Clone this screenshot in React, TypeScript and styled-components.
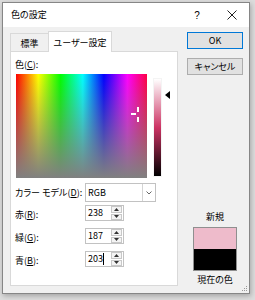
import styled, { createGlobalStyle } from 'styled-components';

const GlobalStyle = createGlobalStyle`
  html, body {
    margin: 0;
    padding: 0;
  }
  body {
    width: 255px;
    height: 300px;
    overflow: hidden;
    background: #dcdcdc;
    font-family: "Noto Sans CJK JP", "Noto Sans", sans-serif;
    font-size: 9px;
    font-feature-settings: 'palt';
    color: #000;
  }
`;

// current colour (238, 187, 203) in HLS
const color = { r: 238, g: 187, b: 203, hue: 341, sat: 0.6, lum: 0.833 };
const cross = { x: 122, y: 41 };

const Window = styled.div`
  position: relative;
  box-sizing: border-box;
  width: 248px;
  height: 292px;
  margin: 2px 0 0 2px;
  border: 1px solid #868686;
  background: #f0f0f0;
  box-shadow: 1px 2px 5px rgba(0, 0, 0, 0.25);
  display: flex;
  flex-direction: column;
`;

const TitleBar = styled.div`
  height: 24px;
  background: #fff;
  display: flex;
  align-items: center;
  padding-left: 8px;
`;

const Title = styled.span`
  line-height: 12px;
`;

const HelpButton = styled.span`
  margin-left: auto;
  width: 8px;
  text-align: center;
  font-family: "Liberation Sans", sans-serif;
  font-size: 10px;
`;

const CloseButton = styled.svg`
  margin: 0 12px 0 26px;
`;

const Body = styled.div`
  flex: 1;
  display: flex;
  padding: 4px 0 7px 7px;
`;

const LeftColumn = styled.div`
  width: 168px;
  display: flex;
  flex-direction: column;
`;

const TabBar = styled.div`
  height: 20px;
  display: flex;
  align-items: flex-end;
`;

const Tab = styled.div<{ $active?: boolean; $width: number }>`
  position: relative;
  z-index: ${({ $active }) => ($active ? 1 : 0)};
  box-sizing: border-box;
  width: ${({ $width }) => $width}px;
  height: ${({ $active }) => ($active ? 21 : 18)}px;
  margin-bottom: ${({ $active }) => ($active ? -1 : 0)}px;
  margin-left: ${({ $active }) => ($active ? -1 : 0)}px;
  border: 1px solid #d9d9d9;
  border-bottom: none;
  background: ${({ $active }) => ($active ? '#fff' : '#f0f0f0')};
  display: flex;
  align-items: center;
  justify-content: center;
  padding-top: ${({ $active }) => ($active ? 0 : 1)}px;
`;

const Panel = styled.div`
  flex: 1;
  box-sizing: border-box;
  background: #fff;
  border: 1px solid #d9d9d9;
  padding: 6px 0 0 4px;
`;

const FieldLabel = styled.div`
  line-height: 13px;
  white-space: nowrap;
`;

const SpectrumRow = styled.div`
  display: flex;
  margin: 3px 0 0 1px;
`;

const Spectrum = styled.div`
  position: relative;
  width: 131px;
  height: 104px;
  background:
    linear-gradient(to bottom, rgba(128, 128, 128, 0), rgb(128, 128, 128)),
    linear-gradient(
      to right,
      #ff0000 0%,
      #ffff00 17%,
      #00ff00 34%,
      #00ffff 51%,
      #0000ff 67%,
      #ff00ff 85%,
      #ff0044 100%
    );
`;

const Crosshair = styled.svg`
  position: absolute;
`;

const LumBar = styled.div`
  width: 9px;
  height: 99px;
  margin: 4px 0 0 6px;
  box-sizing: border-box;
  border: 1px solid #f4f4f4;
`;

const LumArrow = styled.svg`
  margin-left: 3px;
`;

const FieldGrid = styled.div`
  display: grid;
  grid-template-columns: 70px auto;
  grid-template-rows: 19px 20px 20px 20px;
  row-gap: 3px;
  margin-top: 5px;
  align-items: start;
  & > ${FieldLabel} {
    line-height: 19px;
  }
`;

const SpinLabel = styled(FieldLabel)`
  line-height: 16px;
`;

const Combo = styled.div`
  box-sizing: border-box;
  width: 71px;
  height: 19px;
  border: 1px solid #c2c2c2;
  background: #fff;
  display: flex;
  align-items: stretch;
`;

const ComboText = styled.span`
  flex: 1;
  padding-left: 2px;
  line-height: 17px;
`;

const ComboButton = styled.span`
  width: 12px;
  border-left: 1px solid #d4d4d4;
  display: flex;
  align-items: center;
  justify-content: center;
`;

const Spinner = styled.div`
  box-sizing: border-box;
  width: 39px;
  height: 16px;
  border: 1px solid #c2c2c2;
  background: #fff;
  display: flex;
`;

const SpinValue = styled.span`
  flex: 1;
  padding-left: 2px;
  line-height: 14px;
  display: flex;
  align-items: center;
`;

const Caret = styled.span`
  width: 1px;
  height: 12px;
  background: #000;
`;

const SpinButtons = styled.span`
  width: 11px;
  display: flex;
  flex-direction: column;
  gap: 1px;
  padding: 0 1px 0 0;
`;

const SpinArrow = styled.span`
  flex: 1;
  border: 1px solid #c8c8c8;
  background: #f4f4f4;
  display: flex;
  align-items: center;
  justify-content: center;
`;

const RightColumn = styled.div`
  width: 56px;
  margin-left: 9px;
  display: flex;
  flex-direction: column;
`;

const Button = styled.div<{ $default?: boolean }>`
  box-sizing: border-box;
  height: 17px;
  border: 1px solid ${({ $default }) => ($default ? '#0078d7' : '#adadad')};
  background: #e1e1e1;
  display: flex;
  align-items: center;
  justify-content: center;
  margin-top: ${({ $default }) => ($default ? 1 : 9)}px;
`;

const SwatchLabel = styled.div<{ $top?: boolean }>`
  line-height: 12px;
  text-align: center;
  margin-top: ${({ $top }) => ($top ? 'auto' : '3px')};
`;

const Swatch = styled.div`
  box-sizing: border-box;
  width: 44px;
  height: 44px;
  margin: 4px auto 0;
  border: 1px solid #8f8f8f;
  display: flex;
  flex-direction: column;
`;

const SwatchHalf = styled.div<{ $fill: string; $h: number }>`
  height: ${({ $h }) => $h}px;
  background: ${({ $fill }) => $fill};
`;

const Grip = styled.svg`
  position: absolute;
  right: 1px;
  bottom: 1px;
`;

const SpinBox = ({ value, caret }: { value: number; caret?: boolean }) => (
  <Spinner>
    <SpinValue>
      {value}
      {caret && <Caret />}
    </SpinValue>
    <SpinButtons>
      <SpinArrow>
        <svg width="5" height="3" viewBox="0 0 5 3">
          <path d="M0 3 L2.5 0 L5 3 Z" fill="#333" />
        </svg>
      </SpinArrow>
      <SpinArrow>
        <svg width="5" height="3" viewBox="0 0 5 3">
          <path d="M0 0 L2.5 3 L5 0 Z" fill="#333" />
        </svg>
      </SpinArrow>
    </SpinButtons>
  </Spinner>
);

const App = () => {
  const arrowTop = 4 + (1 - color.lum) * 99 - 4;
  const hex = `rgb(${color.r}, ${color.g}, ${color.b})`;

  return (
    <>
      <GlobalStyle />
      <Window>
        <TitleBar>
          <Title>色の設定</Title>
          <HelpButton>?</HelpButton>
          <CloseButton width="10" height="10" viewBox="0 0 10 10">
            <path d="M0.5 0.5 L9.5 9.5 M9.5 0.5 L0.5 9.5" stroke="#222" strokeWidth="1" />
          </CloseButton>
        </TitleBar>
        <Body>
          <LeftColumn>
            <TabBar>
              <Tab $width={39}>標準</Tab>
              <Tab $active $width={64}>ユーザー設定</Tab>
            </TabBar>
            <Panel>
              <FieldLabel>
                色(<u>C</u>):
              </FieldLabel>
              <SpectrumRow>
                <Spectrum>
                  <Crosshair
                    width="16"
                    height="16"
                    viewBox="0 0 16 16"
                    style={{ left: cross.x - 8, top: cross.y - 8 }}
                  >
                    <rect x="7" y="0" width="2" height="5" fill="#fff" />
                    <rect x="7" y="10" width="2" height="5" fill="#fff" />
                    <rect x="1" y="6" width="5" height="2" fill="#fff" />
                  </Crosshair>
                </Spectrum>
                <LumBar
                  style={{
                    background: `linear-gradient(to bottom, #fff, hsl(${color.hue}, 60%, 50%), #000)`,
                  }}
                />
                <LumArrow width="5" height="8" viewBox="0 0 5 8" style={{ marginTop: arrowTop }}>
                  <path d="M0 4 L5 0 L5 8 Z" fill="#000" />
                </LumArrow>
              </SpectrumRow>
              <FieldGrid>
                <FieldLabel>
                  カラー モデル(<u>D</u>):
                </FieldLabel>
                <Combo>
                  <ComboText>RGB</ComboText>
                  <ComboButton>
                    <svg width="6" height="4" viewBox="0 0 6 4">
                      <path d="M0.5 0.5 L3 3 L5.5 0.5" stroke="#666" fill="none" />
                    </svg>
                  </ComboButton>
                </Combo>
                <SpinLabel>
                  赤(<u>R</u>):
                </SpinLabel>
                <SpinBox value={color.r} />
                <SpinLabel>
                  緑(<u>G</u>):
                </SpinLabel>
                <SpinBox value={color.g} />
                <SpinLabel>
                  青(<u>B</u>):
                </SpinLabel>
                <SpinBox value={color.b} caret />
              </FieldGrid>
            </Panel>
          </LeftColumn>
          <RightColumn>
            <Button $default>OK</Button>
            <Button>キャンセル</Button>
            <SwatchLabel $top>新規</SwatchLabel>
            <Swatch>
              <SwatchHalf $fill={hex} $h={21} />
              <SwatchHalf $fill="#000" $h={21} />
            </Swatch>
            <SwatchLabel>現在の色</SwatchLabel>
          </RightColumn>
        </Body>
        <Grip width="7" height="7" viewBox="0 0 7 7">
          <rect x="5" y="1" width="1" height="1" fill="#999" />
          <rect x="3" y="3" width="1" height="1" fill="#999" />
          <rect x="5" y="3" width="1" height="1" fill="#999" />
          <rect x="1" y="5" width="1" height="1" fill="#999" />
          <rect x="3" y="5" width="1" height="1" fill="#999" />
          <rect x="5" y="5" width="1" height="1" fill="#999" />
        </Grip>
      </Window>
    </>
  );
};

export default App;
